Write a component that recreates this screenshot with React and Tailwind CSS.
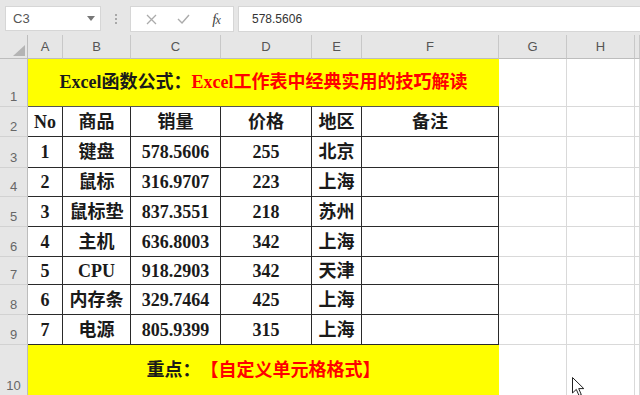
import React from "react";

const serif = "font-['Liberation_Serif','Noto_Sans_CJK_SC',serif] font-bold text-[18px] text-[#1a1a1a]";

const rows = [
  ["No", "商品", "销量", "价格", "地区", "备注"],
  ["1", "键盘", "578.5606", "255", "北京", ""],
  ["2", "鼠标", "316.9707", "223", "上海", ""],
  ["3", "鼠标垫", "837.3551", "218", "苏州", ""],
  ["4", "主机", "636.8003", "342", "上海", ""],
  ["5", "CPU", "918.2903", "342", "天津", ""],
  ["6", "内存条", "329.7464", "425", "上海", ""],
  ["7", "电源", "805.9399", "315", "上海", ""],
];

function RowHead({ n, last }) {
  return (
    <div
      className={
        "bg-[#e6e6e6] border-r border-r-[#bdbdbd] flex items-end justify-center pb-[3px] leading-none text-[13px] text-[#666] font-['Liberation_Sans',sans-serif] " +
        (last ? "" : "border-b border-b-[#d2d2d2]")
      }
    >
      {n}
    </div>
  );
}

function Light({ noBottom }) {
  return (
    <div
      className={
        "bg-white border-r border-r-[#d9d9d9] " +
        (noBottom ? "" : "border-b border-b-[#d9d9d9]")
      }
    />
  );
}

export default function App() {
  const letters = ["A", "B", "C", "D", "E", "F", "G", "H", ""];
  return (
    <div className="w-[640px] h-[395px] overflow-hidden relative bg-white select-none">
      {/* toolbar */}
      <div className="h-[35px] bg-[#e6e6e6] flex items-start pt-[6px] font-['Liberation_Sans',sans-serif]">
        <div className="ml-[5px] w-[96px] h-[25px] bg-white border border-[#d6d6d6] flex items-center justify-between pl-[7px] pr-[5px]">
          <span className="text-[13px] text-[#555]">C3</span>
          <svg width="8" height="5" viewBox="0 0 8 5">
            <polygon points="0,0 8,0 4,5" fill="#777" />
          </svg>
        </div>
        <div className="w-[29px] h-[25px] flex flex-col items-center justify-center gap-[2px]">
          <div className="w-[2px] h-[2px] bg-[#a8a8a8]" />
          <div className="w-[2px] h-[2px] bg-[#a8a8a8]" />
          <div className="w-[2px] h-[2px] bg-[#a8a8a8]" />
        </div>
        <div className="w-[104px] h-[26px] bg-white border border-[#d6d6d6] flex items-center">
          <div className="w-[36px] flex justify-center pl-[4px]">
            <svg width="11" height="11" viewBox="0 0 11 11">
              <path d="M1 1 L10 10 M10 1 L1 10" stroke="#ababab" strokeWidth="1.3" />
            </svg>
          </div>
          <div className="w-[32px] flex justify-center">
            <svg width="13" height="10" viewBox="0 0 13 10">
              <path d="M1 5 L5 9 L12 1" stroke="#ababab" strokeWidth="1.4" fill="none" />
            </svg>
          </div>
          <div className="w-[34px] flex justify-center">
            <span className="font-['Liberation_Serif',serif] italic text-[15px] text-[#444] leading-none tracking-[-1px]">
              f<span className="text-[12px]">x</span>
            </span>
          </div>
        </div>
        <div className="ml-[4px] flex-1 h-[26px] bg-white border-l border-y border-[#d6d6d6] flex items-center pl-[13px]">
          <span className="text-[12px] text-[#333]">578.5606</span>
        </div>
      </div>

      {/* sheet */}
      <div className="grid grid-cols-[28px_35px_68px_90px_91px_50px_137px_68px_68px_1fr] grid-rows-[24px_48px_30px_31px_29px_30px_30px_28px_30px_30px_50px]">
        {/* header row */}
        <div className="bg-[#e6e6e6] border-r border-b border-r-[#bdbdbd] border-b-[#bdbdbd] relative">
          <svg className="absolute left-[13px] top-[10px]" width="12" height="11" viewBox="0 0 12 11">
            <polygon points="12,0 12,11 0,11" fill="#b4b4b4" />
          </svg>
        </div>
        {letters.map((l, i) => (
          <div
            key={"h" + i}
            className="bg-[#e6e6e6] border-r border-b border-r-[#c8c8c8] border-b-[#bdbdbd] flex items-center justify-center text-[13px] text-[#555] font-['Liberation_Sans',sans-serif]"
          >
            {l}
          </div>
        ))}

        {/* row 1 */}
        <RowHead n="1" />
        <div className={"col-span-6 bg-[#ffff00] border-b border-b-[#555] flex items-center justify-center " + serif}>
          <span>Excel函数公式：</span>
          <span className="text-[#f00]">Excel工作表中经典实用的技巧解读</span>
        </div>
        <Light />
        <Light />
        <Light />

        {/* rows 2-9 */}
        {rows.map((r, ri) => (
          <React.Fragment key={"r" + ri}>
            <RowHead n={String(ri + 2)} />
            {r.map((c, ci) => (
              <div
                key={ci}
                className={"bg-white border-r border-b border-[#2a2a2a] flex items-center justify-center leading-none " + serif}
              >
                {c}
              </div>
            ))}
            <Light />
            <Light />
            <Light />
          </React.Fragment>
        ))}

        {/* row 10 */}
        <RowHead n="10" last />
        <div className={"col-span-6 bg-[#ffff00] flex items-center justify-center " + serif}>
          <span>重点：</span>
          <span className="text-[#f00]">【自定义单元格格式】</span>
        </div>
        <Light noBottom />
        <Light noBottom />
        <Light noBottom />
      </div>

      {/* mouse cursor */}
      <svg className="absolute left-[572px] top-[377px]" width="13" height="20" viewBox="0 0 13 20">
        <path d="M0.5 0.5 L0.5 16 L4.3 12.4 L7 18.6 L9.3 17.6 L6.7 11.6 L11.8 11.6 Z" fill="#fff" stroke="#222" strokeWidth="1" />
      </svg>
    </div>
  );
}
